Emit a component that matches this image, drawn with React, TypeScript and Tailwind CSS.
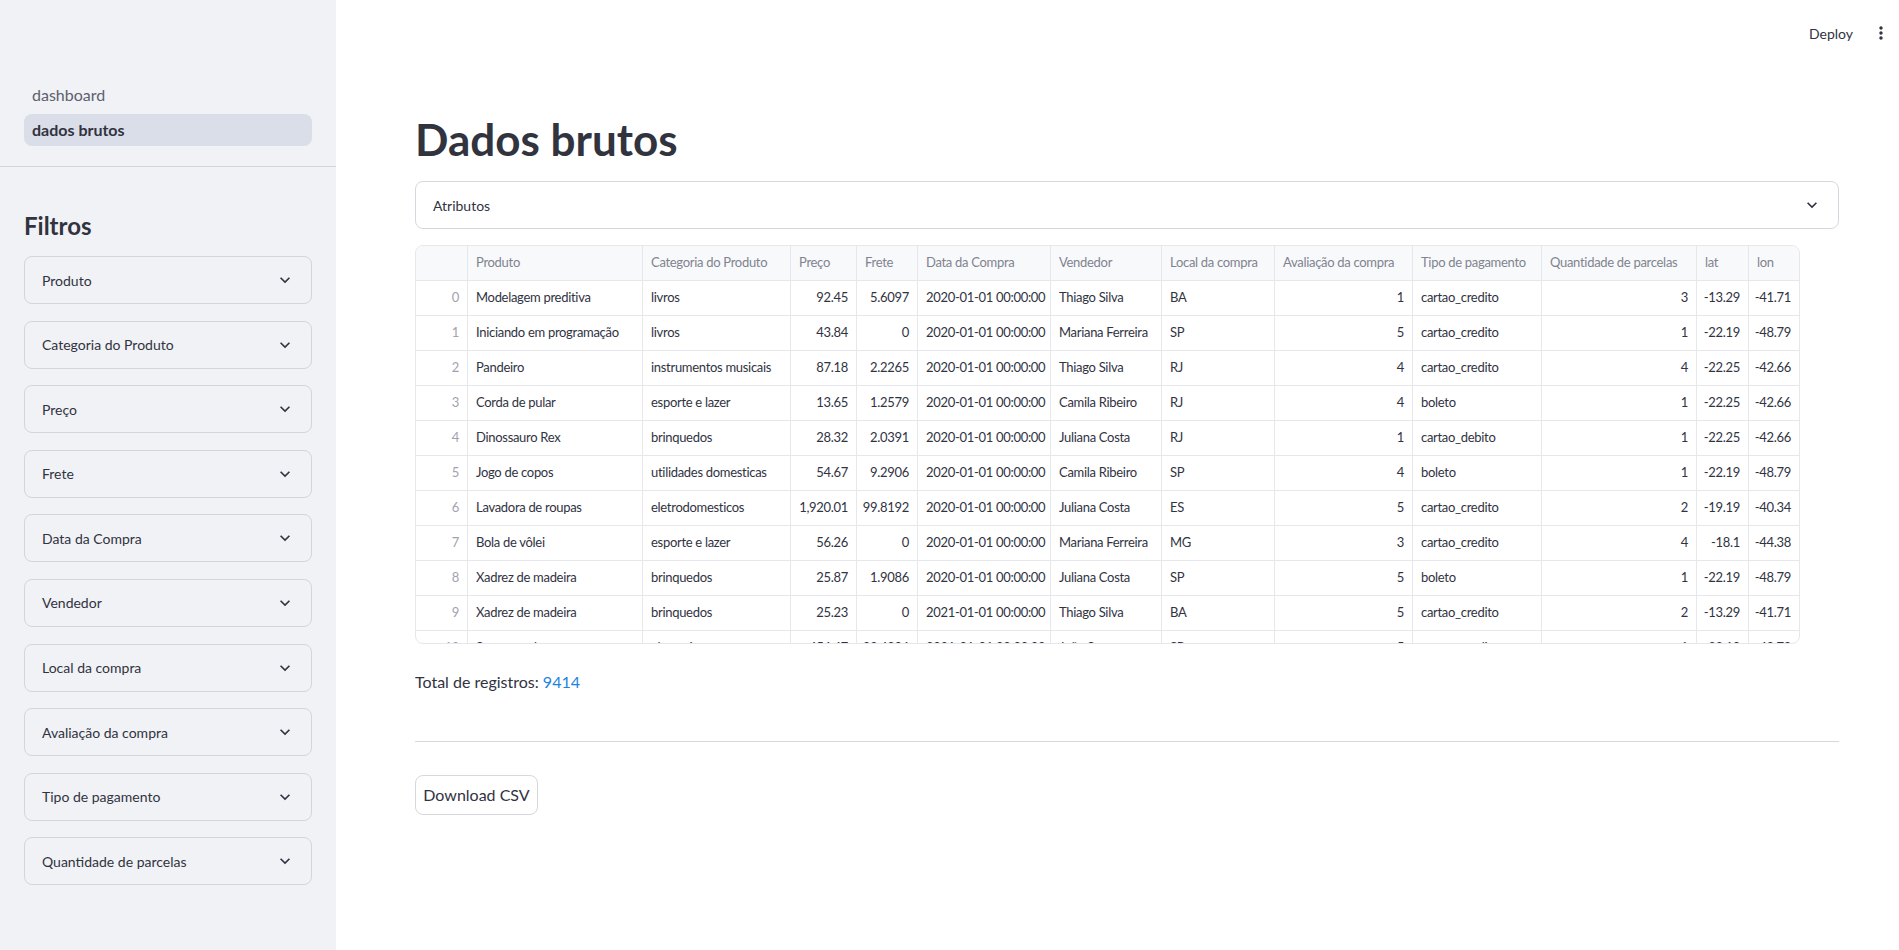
import clsx from "clsx";

const filtros = [
  "Produto",
  "Categoria do Produto",
  "Preço",
  "Frete",
  "Data da Compra",
  "Vendedor",
  "Local da compra",
  "Avaliação da compra",
  "Tipo de pagamento",
  "Quantidade de parcelas",
];

// right = numeric column
const colunas = [
  { nome: "", right: true },
  { nome: "Produto", right: false },
  { nome: "Categoria do Produto", right: false },
  { nome: "Preço", right: true },
  { nome: "Frete", right: true },
  { nome: "Data da Compra", right: false },
  { nome: "Vendedor", right: false },
  { nome: "Local da compra", right: false },
  { nome: "Avaliação da compra", right: true },
  { nome: "Tipo de pagamento", right: false },
  { nome: "Quantidade de parcelas", right: true },
  { nome: "lat", right: true },
  { nome: "lon", right: true },
];

const linhas = [
  ["0", "Modelagem preditiva", "livros", "92.45", "5.6097", "2020-01-01 00:00:00", "Thiago Silva", "BA", "1", "cartao_credito", "3", "-13.29", "-41.71"],
  ["1", "Iniciando em programação", "livros", "43.84", "0", "2020-01-01 00:00:00", "Mariana Ferreira", "SP", "5", "cartao_credito", "1", "-22.19", "-48.79"],
  ["2", "Pandeiro", "instrumentos musicais", "87.18", "2.2265", "2020-01-01 00:00:00", "Thiago Silva", "RJ", "4", "cartao_credito", "4", "-22.25", "-42.66"],
  ["3", "Corda de pular", "esporte e lazer", "13.65", "1.2579", "2020-01-01 00:00:00", "Camila Ribeiro", "RJ", "4", "boleto", "1", "-22.25", "-42.66"],
  ["4", "Dinossauro Rex", "brinquedos", "28.32", "2.0391", "2020-01-01 00:00:00", "Juliana Costa", "RJ", "1", "cartao_debito", "1", "-22.25", "-42.66"],
  ["5", "Jogo de copos", "utilidades domesticas", "54.67", "9.2906", "2020-01-01 00:00:00", "Camila Ribeiro", "SP", "4", "boleto", "1", "-22.19", "-48.79"],
  ["6", "Lavadora de roupas", "eletrodomesticos", "1,920.01", "99.8192", "2020-01-01 00:00:00", "Juliana Costa", "ES", "5", "cartao_credito", "2", "-19.19", "-40.34"],
  ["7", "Bola de vôlei", "esporte e lazer", "56.26", "0", "2020-01-01 00:00:00", "Mariana Ferreira", "MG", "3", "cartao_credito", "4", "-18.1", "-44.38"],
  ["8", "Xadrez de madeira", "brinquedos", "25.87", "1.9086", "2020-01-01 00:00:00", "Juliana Costa", "SP", "5", "boleto", "1", "-22.19", "-48.79"],
  ["9", "Xadrez de madeira", "brinquedos", "25.23", "0", "2021-01-01 00:00:00", "Thiago Silva", "BA", "5", "cartao_credito", "2", "-13.29", "-41.71"],
  ["10", "Smartwatch", "eletronicos", "456.47", "23.4806", "2021-01-01 00:00:00", "João Souza", "SP", "5", "cartao_credito", "1", "-22.19", "-48.79"],
];

const ChevronDown = () => (
  <svg width="20" height="20" viewBox="0 0 24 24" fill="#31333f">
    <path d="M16.59 8.59 12 13.17 7.41 8.59 6 10l6 6 6-6z" />
  </svg>
);

const MoreVert = () => (
  <svg width="20" height="20" viewBox="0 0 24 24" fill="#31333f">
    <path d="M12 8c1.1 0 2-.9 2-2s-.9-2-2-2-2 .9-2 2 .9 2 2 2zm0 2c-1.1 0-2 .9-2 2s.9 2 2 2 2-.9 2-2-.9-2-2-2zm0 6c-1.1 0-2 .9-2 2s.9 2 2 2 2-.9 2-2-.9-2-2-2z" />
  </svg>
);

const Expander = ({ label, styleClass }: { label: string; styleClass?: string }) => (
  <div
    className={clsx(
      "flex h-[48px] items-center justify-between rounded-lg border pl-[17px] pr-[16px] text-[14px]",
      styleClass
    )}
  >
    <span>{label}</span>
    <ChevronDown />
  </div>
);

const Sidebar = () => (
  <aside className="flex h-full w-[336px] shrink-0 flex-col bg-[#f0f2f6]">
    {/* NAV */}
    <nav className="flex flex-col gap-[3px] px-[24px] pt-[79px]">
      <a className="flex h-[32px] items-center rounded-lg px-[8px] text-[16px] text-[#5d606d]">
        dashboard
      </a>
      <a className="flex h-[32px] items-center rounded-lg bg-[#dadee8] px-[8px] text-[16px] font-bold">
        dados brutos
      </a>
    </nav>
    <div className="mt-[20px] h-px bg-[#d5d6dc]"></div>

    {/* FILTROS */}
    <div className="px-[24px]">
      <h2 className="mt-[44px] text-[24px] font-bold leading-[30px]">Filtros</h2>
      <div className="mt-[15px] flex flex-col gap-[16.6px]">
        {filtros.map((f) => (
          <Expander key={f} label={f} styleClass="border-[#d3d5db]" />
        ))}
      </div>
    </div>
  </aside>
);

const DataTable = () => (
  <div className="mt-[16px] h-[399px] w-[1385px] overflow-hidden rounded-lg border border-[#e6e7eb] text-[13px] tracking-[-0.3px]">
    <div className="grid h-[35px] grid-cols-[52px_175px_148px_66px_61px_133px_111px_113px_138px_129px_155px_52px_1fr] border-b border-[#e6e7eb] bg-[#f8f9fb] text-[#80838f]">
      {colunas.map((c, i) => (
        <div
          key={i}
          className={clsx(
            "flex items-center overflow-hidden whitespace-nowrap px-[8px]",
            i < colunas.length - 1 && "border-r border-[#e6e7eb]"
          )}
        >
          {c.nome}
        </div>
      ))}
    </div>
    {linhas.map((linha) => (
      <div
        key={linha[0]}
        className="grid h-[35px] grid-cols-[52px_175px_148px_66px_61px_133px_111px_113px_138px_129px_155px_52px_1fr] border-b border-[#e6e7eb]"
      >
        {linha.map((v, i) => (
          <div
            key={i}
            className={clsx(
              "flex items-center overflow-hidden whitespace-nowrap px-[8px]",
              colunas[i].right && "justify-end",
              i === 0 && "text-[#a0a3ae]",
              i < linha.length - 1 && "border-r border-[#e6e7eb]"
            )}
          >
            {v}
          </div>
        ))}
      </div>
    ))}
  </div>
);

export default function App() {
  return (
    <div className="flex h-[950px] w-full overflow-hidden bg-white font-[Lato,sans-serif] text-[#31333f]">
      <Sidebar />
      <main className="flex min-w-0 flex-1 flex-col">
        <header className="flex h-[66px] items-center justify-end gap-[18px] pr-[8px]">
          <span className="text-[14px]">Deploy</span>
          <MoreVert />
        </header>

        <div className="ml-[79px] mt-[47px] flex w-[1424px] flex-col">
          <h1 className="h-[53px] text-[44px] font-bold leading-[53px]">Dados brutos</h1>
          <Expander label="Atributos" styleClass="mt-[15px] border-[#d6d8dd] bg-white" />
          <DataTable />
          <p className="mt-[26px] text-[16px] leading-[24px]">
            Total de registros: <span className="text-[#1c83e1]">9414</span>
          </p>
          <div className="mt-[47px] h-px bg-[#d6d8dd]"></div>
          <button className="mt-[33px] h-[40px] w-[123px] rounded-lg border border-[#d6d8dd] bg-white text-[16px]">
            Download CSV
          </button>
        </div>
      </main>
    </div>
  );
}
